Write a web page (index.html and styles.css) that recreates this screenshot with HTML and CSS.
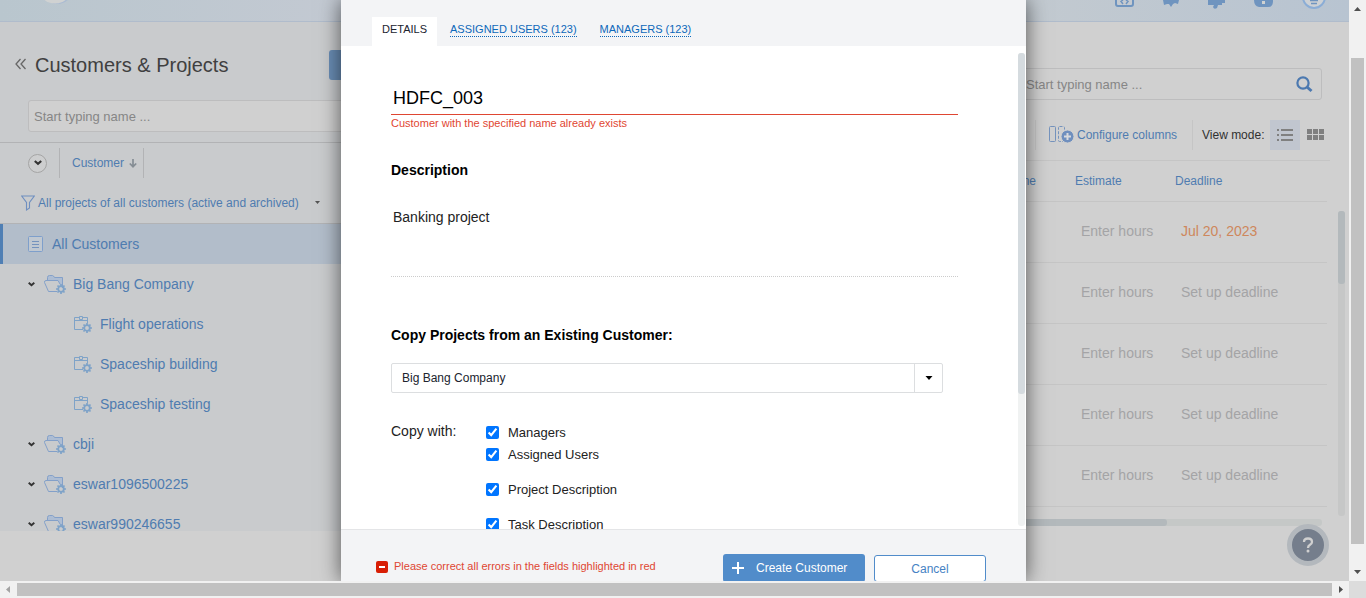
FILE: index.html
```html
<!DOCTYPE html>
<html lang="en">
<head>
<meta charset="utf-8">
<title>Customers &amp; Projects</title>
<link rel="stylesheet" href="styles.css">
</head>
<body>
<svg class="defs" aria-hidden="true">
  <symbol id="gear" viewBox="0 0 10 10">
    <circle cx="5" cy="5" r="2.8" fill="none" stroke="#7fa3c8" stroke-width="1.8"/>
    <path d="M5 0v2M5 8v2M0 5h2M8 5h2M1.5 1.5l1.3 1.3M7.2 7.2l1.3 1.3M8.5 1.5L7.2 2.8M2.8 7.2L1.5 8.5" stroke="#7fa3c8" stroke-width="1.7"/>
  </symbol>
  <symbol id="folder" viewBox="0 0 22 19">
    <path d="M3.5 6V2.5Q3.500 .5 5.500 .5H8.500Q9.500 .5 10.500 2.500H18.500V13" fill="#adbdd3" stroke="#83a0c9"/>
    <path d="M13 16.500H4.500L.5 7.500Q.3 5.500 2 5.500H14L16 9" fill="#c9cbcd" stroke="#83a0c9"/>
    <use href="#gear" x="12" y="9" width="10" height="10"/>
  </symbol>
  <symbol id="project" viewBox="0 0 18 17">
    <path d="M9 13.500H.5V1.500H13.500V7M.5 4.500H13.500" fill="none" stroke="#7fa3c8"/>
    <path d="M5.500 .5h3v3h-3z" fill="#c9cbcd" stroke="#7fa3c8"/>
    <use href="#gear" x="8" y="7" width="10" height="10"/>
  </symbol>
  <symbol id="chevron" viewBox="0 0 7 5">
    <path d="M.7 .8L3.500 3.300L6.300 .8" fill="none" stroke="#333" stroke-width="1.9"/>
  </symbol>
  <symbol id="caret" viewBox="0 0 7 4"><path d="M0 0H7L3.500 4Z" fill="currentColor"/></symbol>
</svg>

<div class="window">
  <div class="viewport">
    <div class="app">
      <header class="topbar">
        <svg class="logo" width="30" height="21" viewBox="0 0 30 21"><circle cx="16" cy="-13" r="17" fill="#acbcd2"/><circle cx="14" cy="-14" r="17.500" fill="#d0d2d2"/></svg>
        <nav class="top-icons">
          <svg width="20" height="9" viewBox="0 0 20 9"><path d="M1 0V4Q1 6 3 6H16Q18 6 18 4V0" fill="#c5cad0" stroke="#6f94bf" stroke-width="2"/><path d="M8 0L6 1.500L8 4M11 0L13 1.500L11 4" fill="none" stroke="#6f94bf" stroke-width="1.500"/></svg>
          <svg width="18" height="9" viewBox="0 0 18 9"><path d="M1 0H17L16 4L13 3L11 4L9 7L7 4L5 4L2 5Z" fill="#6f94bf"/></svg>
          <svg width="20" height="9" viewBox="0 0 20 9"><path d="M1 0H18V3H15V5H11L10 8Q7 10 6 7L7 5H1Z" fill="#6f94bf"/></svg>
          <svg width="20" height="9" viewBox="0 0 20 9"><path d="M0 0H19V1Q19 7 14 7H5Q0 6 0 0Z" fill="#6f94bf"/><path d="M8 1h3v3H8z" fill="#d0d2d2"/></svg>
          <svg width="26" height="10" viewBox="0 0 26 10"><circle cx="13" cy="-3" r="11" fill="#cdd1d5" stroke="#8badd6" stroke-width="2"/><path d="M9 .5h8M10 3.500h6" stroke="#6f94bf" stroke-width="1.500"/></svg>
        </nav>
      </header>

      <div class="columns">
        <aside class="sidebar">
          <div class="side-head">
            <svg width="12" height="12" viewBox="0 0 12 12"><path d="M5.500 1L1 6L5.500 11M10.500 1L6 6L10.500 11" fill="none" stroke="#666" stroke-width="1.300"/></svg>
            <h1>Customers &amp; Projects</h1>
            <button class="add-new" type="button" aria-label="Add new"></button>
          </div>
          <input class="search side-search" type="text" placeholder="Start typing name ..." aria-label="Search customers">
          <div class="side-cols">
            <button class="collapse" type="button" aria-label="Collapse all"><svg width="8" height="6"><use href="#chevron"/></svg></button>
            <a class="sort" href="#">Customer <svg width="8" height="9" viewBox="0 0 8 9"><path d="M4 0V8M.8 4.500L4 7.700L7.200 4.500" fill="none" stroke="#858d94" stroke-width="1.700"/></svg></a>
          </div>
          <div class="filter">
            <svg width="14" height="16" viewBox="0 0 14 16"><path d="M.7 1H13.300L8.500 7.500V13L5.500 15V7.500Z" fill="none" stroke="#6f8fc0" stroke-width="1.100"/></svg>
            <a href="#">All projects of all customers (active and archived)</a>
            <svg class="filter-caret" width="5" height="3"><use href="#caret"/></svg>
          </div>
          <ul class="tree">
            <li class="all"><svg width="15" height="16" viewBox="0 0 15 16"><rect x=".5" y=".5" width="14" height="15" rx="1" fill="#c0c8d1" stroke="#7e9fcb"/><path d="M4 5.500h7M4 8.500h7M4 11.500h7" stroke="#7593bd"/></svg><a href="#">All Customers</a></li>
            <li class="customer"><svg width="7" height="5"><use href="#chevron"/></svg><svg width="22" height="19"><use href="#folder"/></svg><a href="#">Big Bang Company</a></li>
            <li class="project"><svg width="18" height="17"><use href="#project"/></svg><a href="#">Flight operations</a></li>
            <li class="project"><svg width="18" height="17"><use href="#project"/></svg><a href="#">Spaceship building</a></li>
            <li class="project"><svg width="18" height="17"><use href="#project"/></svg><a href="#">Spaceship testing</a></li>
            <li class="customer"><svg width="7" height="5"><use href="#chevron"/></svg><svg width="22" height="19"><use href="#folder"/></svg><a href="#">cbji</a></li>
            <li class="customer"><svg width="7" height="5"><use href="#chevron"/></svg><svg width="22" height="19"><use href="#folder"/></svg><a href="#">eswar1096500225</a></li>
            <li class="customer"><svg width="7" height="5"><use href="#chevron"/></svg><svg width="22" height="19"><use href="#folder"/></svg><a href="#">eswar990246655</a></li>
          </ul>
        </aside>

        <main class="tasks">
          <div class="search-box">
            <input class="search task-search" type="text" placeholder="Start typing name ..." aria-label="Search tasks">
            <svg class="magnifier" width="17" height="17" viewBox="0 0 17 17"><circle cx="7" cy="7" r="5.600" fill="none" stroke="#4c79b0" stroke-width="2.200"/><path d="M11 11L15.500 15" stroke="#4c79b0" stroke-width="3"/></svg>
          </div>
          <div class="toolbar">
            <button class="configure" type="button">
              <svg width="25" height="17" viewBox="0 0 25 17"><rect x=".5" y=".5" width="6" height="15" rx="1" fill="none" stroke="#7593bd"/><rect x="9.500" y=".5" width="6" height="15" rx="1" fill="none" stroke="#7593bd" stroke-dasharray="3 1.500"/><circle cx="18.500" cy="10.500" r="6.500" fill="#6f8fbe" stroke="#d0d0d0"/><path d="M18.500 7v7M15 10.500h7" stroke="#d8dadd" stroke-width="2"/></svg>
              Configure columns
            </button>
            <div class="modes">
              <span>View mode:</span>
              <button class="mode active" type="button" aria-label="List"><svg width="16" height="12" viewBox="0 0 16 12"><path d="M0 1h2M0 6h2M0 11h2M4 1h12M4 6h12M4 11h12" stroke="#808080" stroke-width="2"/></svg></button>
              <button class="mode" type="button" aria-label="Grid"><svg width="17" height="11" viewBox="0 0 17 11"><path d="M0 2.500h5m1 0h5m1 0h5M0 8.500h5m1 0h5m1 0h5" stroke="#808080" stroke-width="5"/></svg></button>
            </div>
          </div>
          <div class="grid-area">
            <table class="grid">
              <thead><tr><th class="prev">ne</th><th class="est">Estimate</th><th class="due">Deadline</th></tr></thead>
              <tbody>
                <tr><td></td><td><input type="text" placeholder="Enter hours" aria-label="Estimate"></td><td><a class="late" href="#">Jul 20, 2023</a></td></tr>
                <tr><td></td><td><input type="text" placeholder="Enter hours" aria-label="Estimate"></td><td><a href="#">Set up deadline</a></td></tr>
                <tr><td></td><td><input type="text" placeholder="Enter hours" aria-label="Estimate"></td><td><a href="#">Set up deadline</a></td></tr>
                <tr><td></td><td><input type="text" placeholder="Enter hours" aria-label="Estimate"></td><td><a href="#">Set up deadline</a></td></tr>
                <tr><td></td><td><input type="text" placeholder="Enter hours" aria-label="Estimate"></td><td><a href="#">Set up deadline</a></td></tr>
              </tbody>
            </table>
            <div class="track"><div class="thumb"></div></div>
          </div>
          <div class="htrack"><div class="hthumb"></div></div>
        </main>
      </div>
      <button class="help" type="button" aria-label="Help"><svg width="12" height="16" viewBox="0 0 12 16"><path d="M2 5Q2 1.500 6 1.500T10 5Q10 6.500 8 7.800T6 11" fill="none" stroke="#d0d0d0" stroke-width="2.300"/><circle cx="6" cy="14" r="1.500" fill="#d0d0d0"/></svg></button>
    </div>

    <div class="overlay">
      <form class="dialog" role="dialog" aria-label="Create customer">
        <nav class="tabs">
          <a class="tab current" href="#">DETAILS</a>
          <a class="tab" href="#"><span>ASSIGNED USERS (123)</span></a>
          <a class="tab" href="#"><span>MANAGERS (123)</span></a>
        </nav>
        <div class="body">
          <div class="fields">
            <input class="name" type="text" value="HDFC_003" aria-label="Customer name">
            <p class="name-error">Customer with the specified name already exists</p>
            <label class="heading" for="desc">Description</label>
            <textarea class="desc" id="desc">Banking project</textarea>
            <label class="heading copy-heading" for="source">Copy Projects from an Existing Customer:</label>
            <div class="select-box">
              <select id="source"><option>Big Bang Company</option></select>
              <span class="arrow"><svg width="8" height="4"><use href="#caret"/></svg></span>
            </div>
            <div class="copy">
              <span class="copy-label">Copy with:</span>
              <div class="checks">
                <label><input type="checkbox" checked>Managers</label>
                <label><input type="checkbox" checked>Assigned Users</label>
                <label class="spaced"><input type="checkbox" checked>Project Description</label>
                <label class="spaced"><input type="checkbox" checked>Task Description</label>
              </div>
            </div>
          </div>
          <div class="dialog-track"><div class="dialog-thumb"></div></div>
        </div>
        <footer class="actions">
          <p class="alert"><svg width="12" height="12" viewBox="0 0 12 12"><rect width="12" height="12" rx="2" fill="#d81e05"/><path d="M3 6h6" stroke="#fff" stroke-width="2"/></svg>Please correct all errors in the fields highlighted in red</p>
          <button class="create" type="button"><svg width="12" height="12" viewBox="0 0 12 12"><path d="M6 0v12M0 6h12" stroke="#fff" stroke-width="2"/></svg>Create Customer</button>
          <button class="cancel" type="button">Cancel</button>
        </footer>
      </form>
    </div>
  </div>

  <div class="vbar"><svg width="7" height="4"><path d="M0 4L3.500 0L7 4Z" fill="#505050"/></svg><div class="vbar-track"><div class="vbar-thumb"></div></div><svg width="7" height="4"><path d="M0 0H7L3.500 4Z" fill="#505050"/></svg></div>
  <div class="hbar"><svg width="4" height="7"><path d="M4 0L0 3.500L4 7Z" fill="#a3a3a3"/></svg><div class="hbar-thumb"></div><svg width="4" height="7"><path d="M0 0L4 3.500L0 7Z" fill="#505050"/></svg></div>
  <div class="corner"></div>
</div>
</body>
</html>
```
FILE: styles.css
```css
* { box-sizing: border-box; }
body { margin: 0; font-family: "Liberation Sans", Arial, sans-serif; font-size: 12px; color: #000; }
a { color: #4f7cb0; text-decoration: none; }
button, input, select, textarea { font: inherit; margin: 0; }
button { border: 0; padding: 0; background: none; }
svg { flex: none; }
.defs { position: absolute; width: 0; height: 0; }

.window { display: grid; grid-template-columns: minmax(0, 1fr) 17px; grid-template-rows: minmax(0, 1fr) 17px; height: 100vh; }
.viewport { position: relative; overflow: hidden; background: #d0d0d0; }
.app { display: flex; flex-direction: column; height: 100%; }

.topbar { display: flex; justify-content: space-between; height: 22px; padding: 0 22px 0 41px; border-bottom: 1px solid #b0bccc; background: linear-gradient(90deg, #b9c6ce, #c5cad3 30%, #c3cad0 75%, #b8c4d1); }
.top-icons { display: flex; gap: 27px; }
.columns { display: grid; grid-template-columns: 1fr 1fr; flex: 1; min-height: 0; }

/* Customer tree */
.sidebar { display: flex; flex-direction: column; overflow: hidden; margin-bottom: 50px; padding-top: 28px; background: #c9cbcd; }
.sidebar > * { flex: none; }
.side-head { display: flex; align-items: center; height: 30px; padding-left: 15px; }
.side-head h1 { width: 294px; margin: 0; padding-left: 8px; font-size: 20px; font-weight: 400; line-height: 32px; color: #404040; }
.side-head svg { margin-bottom: 2px; }
.side-head h1 + .add-new { margin-left: 8px; }
.add-new { flex: 1; height: 30px; border-radius: 3px; background: #6a8eb6; }
.search { height: 32px; border: 1px solid #bdbdbe; border-radius: 3px; padding: 0 5px; background: #d0d0d0; font-size: 13px; }
.search::placeholder { color: #868686; opacity: 1; }
.side-search { margin: 20px 20px 10px 28px; }
.side-cols { display: flex; align-items: center; height: 41px; padding-left: 28px; border-top: 1px solid #b2b3b5; }
.collapse { display: flex; align-items: center; justify-content: center; width: 19px; height: 19px; border: 1px solid #a5a5a5; border-radius: 50%; background: #cdcecf; }
.sort { display: flex; align-items: center; gap: 5px; width: 85px; height: 30px; margin-left: 12px; padding-left: 12px; border: solid #b2b3b5; border-width: 0 1px; }
.filter { display: flex; align-items: center; gap: 3px; height: 41px; padding: 0 0 1px 21px; border-bottom: 1px solid #b2b3b5; }
.filter-caret { margin-left: 13px; color: #555; }
.tree { margin: 0; padding: 0; list-style: none; font-size: 14px; }
.tree li { display: flex; align-items: center; height: 40px; }
.tree .all { gap: 9px; padding-left: 25px; border-left: 3px solid #4f7fb4; background: #b2bdca; }
.customer { padding-left: 28px; }
.customer svg + svg { margin: 0 7px 0 9px; }
.project { gap: 8px; padding-left: 74px; }

/* Task list */
.tasks { min-width: 0; padding: 46px 4px 0 0; }
.search-box { position: relative; width: 302px; margin: 0 23px 0 auto; }
.task-search { width: 100%; }
.magnifier { position: absolute; top: 8px; right: 9px; }
.toolbar { display: flex; justify-content: flex-end; align-items: center; height: 61px; margin-right: 15px; padding-top: 9px; border-bottom: 1px solid #c5c5c5; }
.configure { display: flex; align-items: center; gap: 3px; width: 157px; height: 30px; padding-left: 13px; border-left: 1px solid #c5c5c5; color: #4f7cb0; }
.modes { display: flex; align-items: center; width: 138px; height: 30px; padding-left: 9px; border-left: 1px solid #c5c5c5; color: #303030; }
.modes span { width: 68px; white-space: nowrap; }
.mode { display: flex; flex: none; align-items: center; justify-content: center; width: 30px; height: 30px; }
.active { background: #c1c6cf; }
.grid-area { display: flex; gap: 11px; }
.grid { flex: 1; border-collapse: collapse; table-layout: fixed; }
.grid th { height: 40px; padding: 0; font-weight: 400; text-align: left; color: #4f7cb0; }
.grid .prev { padding-right: 39px; text-align: right; }
.est { width: 100px; }
.due { width: 152px; }
.grid tr { border-bottom: 1px solid #c5c5c5; }
.grid td { height: 61px; padding: 0 6px 1px; font-size: 14px; }
.grid td input { width: 88px; padding: 0; border: 0; background: none; font-size: 14px; }
.grid td input::placeholder { color: #a4a4a6; opacity: 1; }
.grid td a { color: #a4a4a6; }
.grid td a.late { color: #ce875c; }
.track { width: 7px; margin: 50px 0 -9px; border-radius: 3px; background: #c6c7c7; }
.thumb { height: 73px; border-radius: 3px; background: #b3b9bc; }
.htrack { height: 7px; margin: 12px 23px 0 0; border-radius: 3px; background: #c5c8c7; }
.hthumb { width: 76%; height: 7px; border-radius: 3px; background: #b3b9bc; }
.help { position: absolute; right: 20px; bottom: 15px; display: flex; align-items: center; justify-content: center; width: 42px; height: 42px; border: 5px solid #b3b8bd; border-radius: 50%; background: #757e8c; }

/* Dialog */
.overlay { position: absolute; inset: 0; display: flex; justify-content: center; padding-left: 18px; }
.dialog { display: flex; flex-direction: column; width: 685px; background: #fff; box-shadow: 0 0 20px rgba(0, 0, 0, .6); }
.tabs { display: flex; align-items: flex-end; height: 46px; padding-left: 31px; background: #f3f4f6; font-size: 11px; }
.tab { margin-left: 13px; height: 29px; padding-top: 6px; color: #0d68ba; }
.tab span { display: block; line-height: 13px; border-bottom: 1px dotted #0d68ba; }
.tab + .tab + .tab { margin-left: 23px; }
.tab.current { margin: 0; padding: 6px 10px 0; background: #fff; color: #20242e; line-height: 13px; }
.body { display: flex; flex: 1; min-height: 0; overflow: hidden; }
.fields { flex: 1; padding: 37px 60px 0 50px; }
.name { display: block; width: 100%; height: 32px; border: 0; border-bottom: 1px solid #df4632; padding: 0 2px; font-size: 18px; }
.name-error { margin: 2px 0 32px; font-size: 11px; line-height: 13px; color: #df4632; }
.heading { display: block; font-size: 14px; font-weight: 700; line-height: 16px; }
.desc { display: block; width: 100%; height: 68px; margin: 31px 0 50px; padding: 0 2px; border: 0; border-bottom: 1px dotted #ccc; resize: none; font-size: 14px; line-height: 16px; color: #222; }
.select-box { position: relative; width: 552px; margin: 20px 0 28px; }
.select-box select { display: block; width: 100%; height: 30px; padding: 0 10px; border: 1px solid #dcdee0; border-radius: 2px; appearance: none; background: #fff; color: #20242e; }
.arrow { position: absolute; inset: 1px 1px 1px auto; display: flex; align-items: center; justify-content: center; width: 28px; border-left: 1px solid #dcdee0; pointer-events: none; }
.copy { display: flex; color: #222; }
.copy-label { width: 95px; font-size: 14px; line-height: 20px; }
.checks { display: flex; flex-direction: column; font-size: 13px; }
.checks label { display: flex; align-items: center; gap: 9px; height: 22px; }
.checks .spaced { margin-top: 13px; }
.checks input { width: 13px; height: 13px; margin: 0; accent-color: #0075ff; }
.dialog-track { width: 7px; margin: 7px 1px 3px 0; border-radius: 3px; background: #f0f2f2; }
.dialog-thumb { height: 72%; border-radius: 3px; background: #d5dbdf; }
.actions { display: flex; align-items: flex-start; height: 52px; padding: 24px 40px 0 35px; border-top: 1px solid #e4e5e7; background: #f3f4f6; overflow: hidden; }
.alert { display: flex; align-items: center; gap: 6px; flex: 1; margin: 6px 0 0; font-size: 11px; line-height: 13px; color: #df4632; }
.create, .cancel { height: 28px; flex: none; border-radius: 3px; }
.create { display: flex; align-items: center; gap: 12px; width: 142px; padding-left: 9px; background: #518cca; color: #fff; }
.cancel { width: 112px; height: 27px; margin: 1px 0 0 9px; border: 1px solid #518cca; background: #fff; color: #4682c4; }

/* Window scroll bars */
.vbar, .hbar { display: flex; align-items: center; background: #f1f1f1; }
.vbar { flex-direction: column; padding: 7px 0; }
.vbar-track { display: flex; flex-direction: column; flex: 1; width: 13px; padding: 47px 0 26px; }
.vbar-thumb { flex: 1; background: #c1c1c1; }
.hbar { gap: 7px; padding: 0 6px; }
.hbar-thumb { flex: 1; height: 13px; background: #c1c1c1; }
.corner { background: #dcdcdc; }
```
